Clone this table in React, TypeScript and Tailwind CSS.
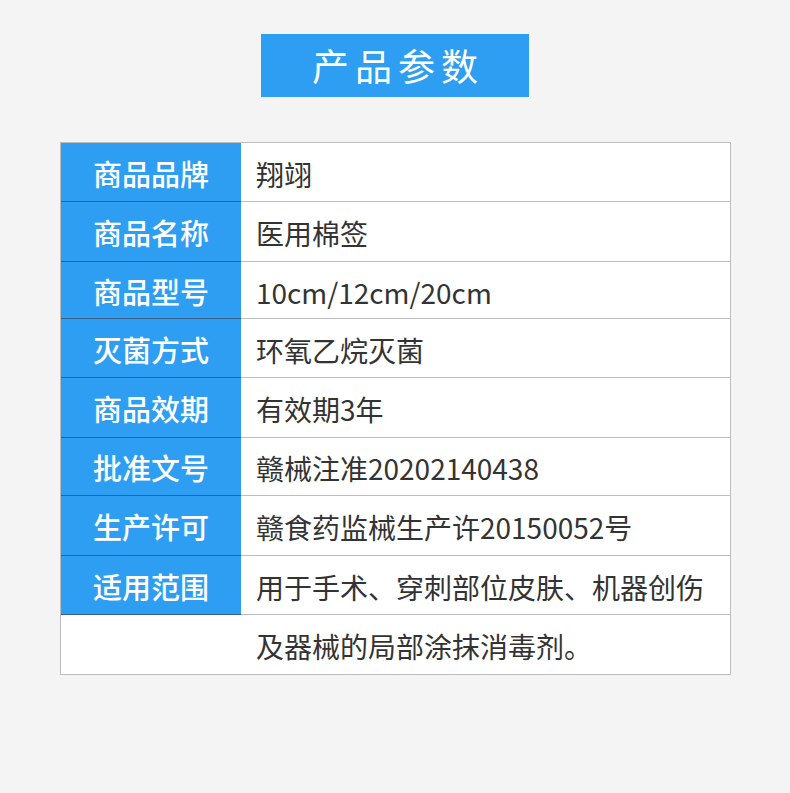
const rows: { label: string; value: string; h: string }[] = [
  { label: '商品品牌', value: '翔翊', h: 'h-[59px]' },
  { label: '商品名称', value: '医用棉签', h: 'h-[60px]' },
  { label: '商品型号', value: '10cm/12cm/20cm', h: 'h-[57px]' },
  { label: '灭菌方式', value: '环氧乙烷灭菌', h: 'h-[59px]' },
  { label: '商品效期', value: '有效期3年', h: 'h-[60px]' },
  { label: '批准文号', value: '赣械注准20202140438', h: 'h-[58px]' },
  { label: '生产许可', value: '赣食药监械生产许20150052号', h: 'h-[60px]' },
  { label: '适用范围', value: '用于手术、穿刺部位皮肤、机器创伤', h: 'h-[59px]' },
];

export default function App() {
  return (
    <div className="w-[790px] h-[793px] bg-[#f4f4f4] font-['Noto_Sans_CJK_SC',sans-serif] pt-[34px]">
      <div className="mx-auto w-[268px] h-[63px] bg-[#2d9ef1] flex items-center justify-center text-white text-[37px] tracking-[6px] pl-[6px]">
        产品参数
      </div>

      <div className="mt-[45px] ml-[60px] w-[671px] border border-[#bdbdbd] bg-white">
        {rows.map((r) => (
          <div key={r.label} className={`flex ${r.h} border-b border-[#bdbdbd]`}>
            <div className="w-[180px] shrink-0 bg-[#2d9ef1] border-b border-[#35618a] -mb-px flex items-center justify-center pt-[3px] text-white text-[29px] font-medium">
              {r.label}
            </div>
            <div className="flex-1 flex items-center pl-[15px] pt-[3px] text-[#333] text-[28px]">
              {r.value}
            </div>
          </div>
        ))}
        <div className="h-[59px] flex items-center pl-[195px] pt-[3px] text-[#333] text-[28px]">
          及器械的局部涂抹消毒剂。
        </div>
      </div>
    </div>
  );
}
